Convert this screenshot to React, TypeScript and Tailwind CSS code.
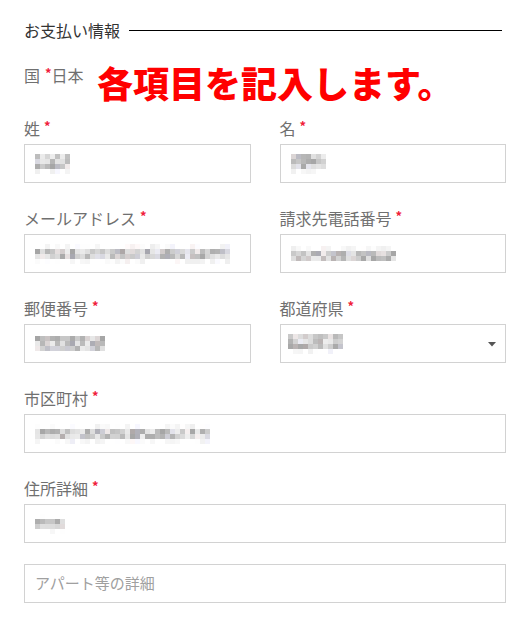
import React from "react";

const FONT = '"Noto Sans CJK JP", "Noto Sans", sans-serif';

function seeded(seed: number) {
  let s = seed;
  return () => {
    s = (s * 9301 + 49297) % 233280;
    return s / 233280;
  };
}

function Mosaic({ cols, rows, seed, dense = [0, rows] }: { cols: number; rows: number; seed: number; dense?: number[] }) {
  const rnd = seeded(seed);
  const cells: React.ReactNode[] = [];
  for (let r = 0; r < rows; r++) {
    for (let c = 0; c < cols; c++) {
      const inDense = r >= dense[0] && r < dense[1];
      const v = rnd();
      let g: number;
      if (inDense) g = 165 + Math.floor(v * 75);
      else g = v < 0.5 ? 255 : 222 + Math.floor(v * 33);
      const tint = rnd();
      const rr = g + (tint > 0.85 ? 6 : 0);
      const bb = g + (tint < 0.15 ? 8 : 0);
      cells.push(
        <div
          key={r * cols + c}
          style={{
            width: 5,
            height: 5,
            background: `rgb(${Math.min(255, rr)},${g},${Math.min(255, bb)})`,
          }}
        />
      );
    }
  }
  return (
    <div className="grid" style={{ gridTemplateColumns: `repeat(${cols}, 5px)` }}>
      {cells}
    </div>
  );
}

function Label({ text }: { text: string }) {
  return (
    <div className="flex items-start h-[24px] mb-[4px] text-[16px] leading-[24px] text-[#707070]">
      <span>{text}</span>
      <span className="ml-[4px] text-[#f0203a] text-[13px] leading-[20px] font-bold">*</span>
    </div>
  );
}

function Input({ children, select = false }: { children?: React.ReactNode; select?: boolean }) {
  return (
    <div className="relative h-[39px] border border-[#d2d2d2] bg-white flex items-center pl-[10px]">
      {children}
      {select && (
        <svg className="absolute right-[9px] top-[17px]" width="8" height="5" viewBox="0 0 8 5">
          <polygon points="0,0 8,0 4,4.5" fill="#555" />
        </svg>
      )}
    </div>
  );
}

export default function App() {
  return (
    <div className="relative w-[528px] h-[617px] bg-white" style={{ fontFamily: FONT }}>
      <div className="pl-[24px] pr-[22px] pt-[18px]">
        <div className="flex items-center h-[24px] gap-[9px]">
          <span className="text-[16px] leading-[24px] text-[#333]">お支払い情報</span>
          <div className="flex-1 h-px bg-black mr-[4px]" />
        </div>
        <div className="mt-[21px] h-[24px] flex items-start text-[16px] leading-[24px] text-[#707070]">
          <span>国</span>
          <span className="ml-[5px] text-[#f0203a] text-[13px] leading-[20px] font-bold">*</span>
          <span>日本</span>
        </div>
        <div className="mt-[29px] grid grid-cols-2 gap-x-[29px] gap-y-[23px]">
          <div>
            <Label text="姓" />
            <Input>
              <Mosaic cols={7} rows={4} seed={3} dense={[0, 3]} />
            </Input>
          </div>
          <div>
            <Label text="名" />
            <Input>
              <Mosaic cols={7} rows={4} seed={11} dense={[0, 3]} />
            </Input>
          </div>
          <div>
            <Label text="メールアドレス" />
            <Input>
              <Mosaic cols={39} rows={4} seed={21} dense={[1, 3]} />
            </Input>
          </div>
          <div>
            <Label text="請求先電話番号" />
            <Input>
              <Mosaic cols={21} rows={3} seed={33} dense={[1, 3]} />
            </Input>
          </div>
          <div>
            <Label text="郵便番号" />
            <Input>
              <Mosaic cols={14} rows={3} seed={45} dense={[0, 3]} />
            </Input>
          </div>
          <div>
            <Label text="都道府県" />
            <Input select>
              <div className="ml-[-3px]">
                <Mosaic cols={11} rows={4} seed={57} dense={[0, 3]} />
              </div>
            </Input>
          </div>
          <div className="col-span-2">
            <Label text="市区町村" />
            <Input>
              <Mosaic cols={35} rows={4} seed={69} dense={[1, 3]} />
            </Input>
          </div>
          <div className="col-span-2">
            <Label text="住所詳細" />
            <Input>
              <Mosaic cols={6} rows={4} seed={81} dense={[1, 3]} />
            </Input>
            <div className="mt-[21px]">
              <Input>
                <span className="text-[15px] text-[#a0a0a0]">アパート等の詳細</span>
              </Input>
            </div>
          </div>
        </div>
      </div>
      <div
        className="absolute left-[97px] top-[62px] text-[36px] leading-[40px] font-black text-[#ff0000] whitespace-nowrap"
        style={{ fontFamily: FONT }}
      >
        各項目を記入します。
      </div>
    </div>
  );
}
